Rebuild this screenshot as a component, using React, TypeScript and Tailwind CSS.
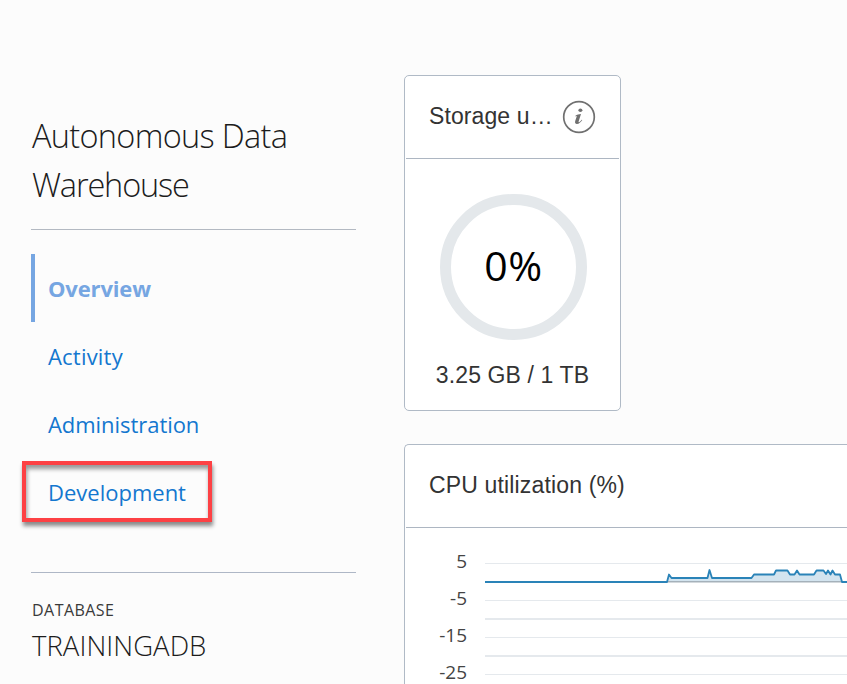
import React from "react";

function Sidebar() {
  return (
    <aside className="flex w-[325px] shrink-0 flex-col font-['Open_Sans',sans-serif]">
      <h1 className="flex h-[118px] flex-col whitespace-nowrap pl-px text-[32.5px] leading-[49px] font-light text-[#1c1c1c]">
        <span className="tracking-[-0.7px]">Autonomous Data</span>
        <span className="tracking-[-1.15px]">Warehouse</span>
      </h1>
      <hr className="h-px border-0 bg-[#b3b9c2]" />
      <nav className="mt-6 flex flex-col text-[22px] text-[#1377cf]">
        <a className="flex h-[68px] items-center border-l-4 border-[#76a6e2] pl-[13px] font-bold text-[#76a6e2]">
          <span className="tracking-[-0.15px]">Overview</span>
        </a>
        <a className="flex h-[68px] items-center pl-[17px]">
          <span className="tracking-[0.2px]">Activity</span>
        </a>
        <a className="flex h-[68px] items-center pl-[17px]">
          <span className="tracking-[-0.05px]">Administration</span>
        </a>
        <a className="relative flex h-[68px] items-center pl-[17px]">
          <span>Development</span>
          <span className="absolute top-[3px] -left-[9px] h-[61px] w-[190px] border-4 border-[#fd4144] shadow-[1px_4px_4px_rgba(0,0,0,0.45),inset_1px_4px_4px_rgba(0,0,0,0.4)]" />
        </a>
      </nav>
      <hr className="mt-[46px] h-px border-0 bg-[#aeb7c6]" />
      <div className="mt-[26px] pl-px text-[16px] leading-[22px] font-medium text-[#3a3a3a]">
        <span className="tracking-[0.45px]">DATABASE</span>
      </div>
      <div className="mt-[5px] pl-px text-[27.5px] leading-[40px] font-light text-[#1c1c1c]">
        <span className="tracking-[0.05px]">TRAININGADB</span>
      </div>
    </aside>
  );
}

function InfoIcon() {
  return (
    <svg width="34" height="34" viewBox="0 0 34 34" className="shrink-0">
      <circle cx="17" cy="17" r="15.3" fill="none" stroke="#707070" strokeWidth="1.7" />
      <ellipse cx="18.400" cy="10.3" rx="2" ry="1.7" fill="#707070" />
      <path
        d="M13.4 15.800 C15 14.500 16.900 14.100 19 14 L16.600 21.400 C16.400 22.200 16.800 22.400 17.500 21.900 C18.300 21.400 19 20.700 19.700 19.700 L20.300 20.100 C18.800 22.500 17 24 14.900 24 C13.200 24 12.700 22.700 13.200 21.100 L14.800 16.300 C14.900 15.800 14.600 15.900 13.600 16.500 Z"
        fill="#707070"
      />
    </svg>
  );
}

function StorageCard() {
  return (
    <section className="flex h-[336px] w-[217px] flex-col rounded-[5px] border border-[#b0bac6] bg-white">
      <header className="mx-px flex h-[83px] shrink-0 items-center border-b border-[#adb6c2] pl-[23px]">
        <h2 className="w-[126px] pb-[2px] text-[23px] leading-7 whitespace-nowrap text-[#333]">
          <span className="tracking-[0.1px]">Storage u…</span>
        </h2>
        <div className="ml-[7px] flex">
          <InfoIcon />
        </div>
      </header>
      <div className="ml-[35px] mt-[35px] flex h-[146px] w-[147px] shrink-0 items-center justify-center rounded-full border-[11px] border-[#e4e8eb] pb-[2px] font-['Open_Sans',sans-serif] text-[41px] text-black">
        <span className="tracking-[0.7px]">0%</span>
      </div>
      <p className="mt-[21px] text-center text-[23px] leading-7 text-[#333]">
        <span className="tracking-[0.12px]">3.25 GB / 1 TB</span>
      </p>
    </section>
  );
}

const ticks = ["5", "-5", "-15", "-25"];
const line =
  "M0 23H182L184 15.5 186.5 19H222.5L224.5 11 227 19H266.5L269 15.5H289L291 11.5H302.5L305 15.5H309.5L312 11.5 314.5 15.5H329L331.5 11.5H338.5L341 15 343 11.5 345.5 15.5 347.5 11.5 350 15.5H355L357 23H362";

function CpuCard() {
  return (
    <section className="flex h-[240px] w-[443px] flex-col rounded-tl-[5px] border-t border-l border-[#b0bac6] bg-white">
      <header className="ml-px flex h-[83px] shrink-0 items-center border-b border-[#adb6c2] pb-[2px] pl-[23px]">
        <h2 className="text-[23px] leading-7 text-[#333]">
          <span className="tracking-[0.15px]">CPU utilization (%)</span>
        </h2>
      </header>
      <div className="flex h-[156px] overflow-hidden">
        <div className="mt-[15px] flex w-[62px] shrink-0 flex-col text-right font-['Open_Sans',sans-serif] text-[19px] leading-[37px] text-[#444]">
          {ticks.map((t) => (
            <div key={t}>{t}</div>
          ))}
        </div>
        <svg width="362" height="125" viewBox="0 0 362 125" className="ml-[18px] mt-[31px] shrink-0">
          <g fill="#e5e9ed">
            <rect y="4" width="362" height="1" />
            <rect y="41" width="362" height="1" />
            <rect y="59" width="362" height="2" />
            <rect y="78" width="362" height="1" />
            <rect y="96" width="362" height="2" />
            <rect y="115" width="362" height="1" />
          </g>
          <path d={line + "Z"} fill="#d3e4ef" />
          <rect y="22" width="362" height="1.5" fill="#a5b1ba" />
          <path d={line} fill="none" stroke="#2a83b8" strokeWidth="1.8" strokeLinejoin="round" />
        </svg>
      </div>
    </section>
  );
}

export default function App() {
  return (
    <div className="flex h-[684px] w-[847px] overflow-hidden bg-[#fcfcfc] pl-[31px] font-['Liberation_Sans',Arial,sans-serif]">
      <div className="flex shrink-0 pt-[111px]">
        <Sidebar />
      </div>
      <main className="ml-[48px] flex shrink-0 flex-col gap-[33px] pt-[75px]">
        <StorageCard />
        <CpuCard />
      </main>
    </div>
  );
}
